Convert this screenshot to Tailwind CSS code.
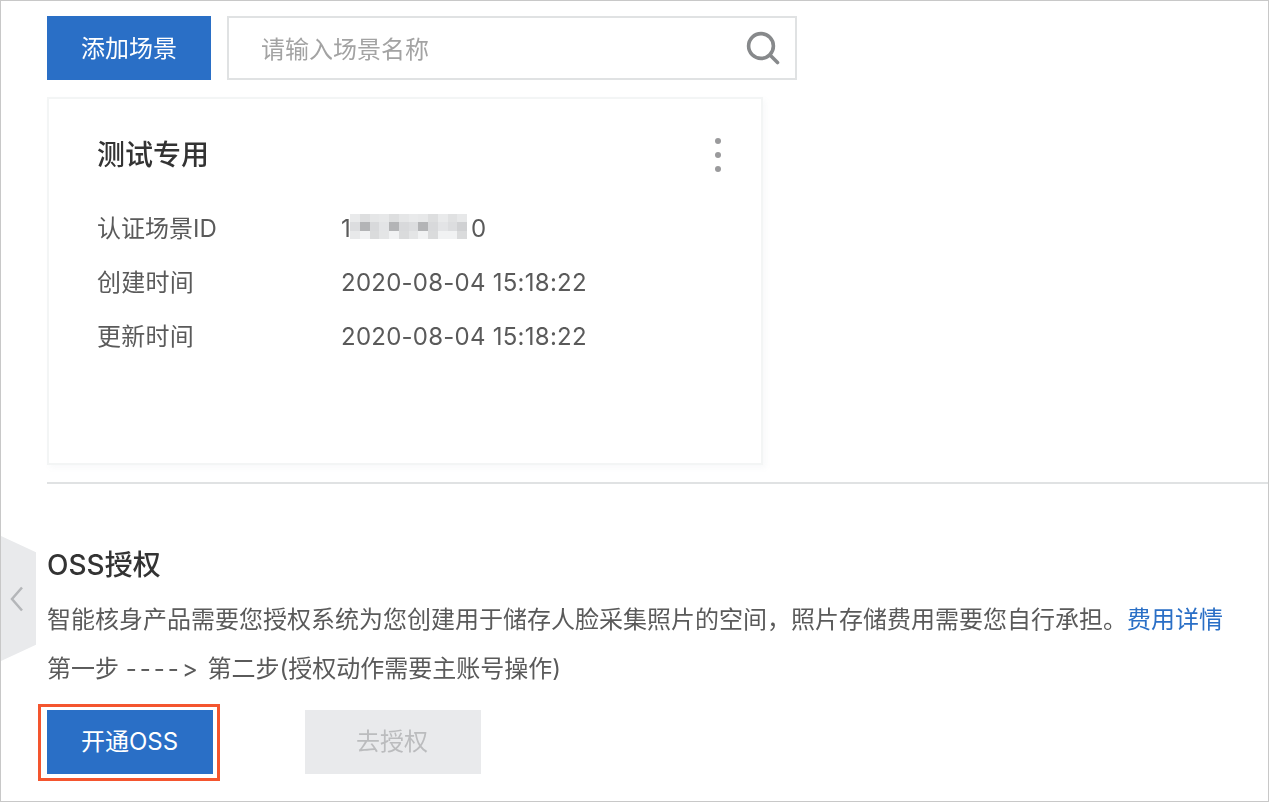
<!DOCTYPE html>
<html lang="zh-CN">
<head>
    <meta charset="UTF-8">
    <title>OSS授权</title>
    <script src="https://cdn.jsdelivr.net/npm/@tailwindcss/browser@4"></script>
</head>
<body class="bg-white">
<div class="relative w-[1269px] h-[802px] overflow-hidden border border-[#c8c8c8] blur-[0.35px] font-['Inter','Noto_Sans_CJK_SC',sans-serif] [font-variant-ligatures:none] [font-feature-settings:'calt'_0] text-[#5a5a5a]">
    <!-- collapse tab -->
    <div class="absolute left-0 top-[535px] w-[35px] h-[125px] bg-[#e9eaec] [clip-path:polygon(0_0,100%_13%,100%_87%,0_100%)] flex items-center pl-[8px]">
        <svg width="16" height="26" viewBox="0 0 16 26" fill="none" stroke="#b4b6b9" stroke-width="2.5"><path d="M13 1.5 3 13l10 11.5"/></svg>
    </div>

    <div class="pl-[46px] pt-[15px]">
        <div class="flex gap-4">
            <button class="w-[164px] h-16 pt-[2px] bg-[#2a6fc6] text-white text-[24px]">添加场景</button>
            <div class="w-[570px] h-16 border-2 border-[#e0e2e3] flex items-center justify-between pl-[32px] pr-[15px]">
                <span class="pt-[4px] text-[24px] text-[#a3a3a3]">请输入场景名称</span>
                <svg width="34" height="34" viewBox="0 0 34 34" fill="none" stroke="#87898b" stroke-width="3.6" stroke-linecap="round"><circle cx="15" cy="15" r="12.4"/><path d="m24 24 7.5 7.5"/></svg>
            </div>
        </div>

        <div class="relative mt-[17px] w-[716px] h-[368px] border-2 border-[#f3f5f5] shadow-[3px_3px_6px_rgba(120,130,160,0.05)] pl-[48px] pt-[37px]">
            <h2 class="text-[28px] leading-[38px] font-medium text-[#333]">测试专用</h2>
            <div class="absolute right-[40px] top-[39px] flex flex-col gap-2">
                <span class="size-[6px] rounded-full bg-[#9a9a9c]"></span>
                <span class="size-[6px] rounded-full bg-[#9a9a9c]"></span>
                <span class="size-[6px] rounded-full bg-[#9a9a9c]"></span>
            </div>
            <dl class="mt-[38px] grid grid-cols-[244px_1fr] auto-rows-[54px] text-[24px] leading-[34px] tracking-[0.25px]">
                <dt class="tracking-normal">认证场景ID</dt>
                <dd class="flex">
                    <span>1</span>
                    <!-- masked id, mosaic cells -->
                    <span class="ml-[-1px] mt-[2px] w-[117px] h-[25px] grid grid-cols-12 grid-rows-[8px_9px_8px]">
                        <i class="bg-[#e9eaeb]"></i><i class="bg-[#dddedf]"></i><i class="bg-[#e5e6e7]"></i><i class="bg-[#e7e8e9]"></i><i class="bg-[#dddedf]"></i><i class="bg-[#e5e6e7]"></i><i class="bg-[#e9eaeb]"></i><i class="bg-[#e7e8e9]"></i><i class="bg-[#dddedf]"></i><i class="bg-[#e9eaeb]"></i><i class="bg-[#e0e1e2]"></i><i class="bg-[#e7e8e9]"></i>
                        <i class="bg-[#dcdddf]"></i><i class="bg-[#b3b4b6]"></i><i class="bg-[#d8d9db]"></i><i class="bg-[#e3e4e6]"></i><i class="bg-[#b3b4b6]"></i><i class="bg-[#d8d9db]"></i><i class="bg-[#dcdddf]"></i><i class="bg-[#b3b4b6]"></i><i class="bg-[#d8d9db]"></i><i class="bg-[#e3e4e6]"></i><i class="bg-[#dcdddf]"></i><i class="bg-[#d0d1d3]"></i>
                        <i class="bg-[#e8e9ea]"></i><i class="bg-[#f1f2f3]"></i><i class="bg-[#dadbdc]"></i><i class="bg-[#e4e5e6]"></i><i class="bg-[#f1f2f3]"></i><i class="bg-[#dadbdc]"></i><i class="bg-[#e4e5e6]"></i><i class="bg-[#f1f2f3]"></i><i class="bg-[#dadbdc]"></i><i class="bg-[#f1f2f3]"></i><i class="bg-[#f1f2f3]"></i><i class="bg-[#dadbdc]"></i>
                    </span>
                    <span class="ml-[4px]">0</span>
                </dd>
                <dt>创建时间</dt>
                <dd>2020-08-04 15:18:22</dd>
                <dt>更新时间</dt>
                <dd>2020-08-04 15:18:22</dd>
            </dl>
        </div>

        <div class="mt-[17px] border-t-2 border-[#e0e2e3]"></div>

        <h2 class="mt-[63px] text-[28px] leading-[36px] font-medium text-[#333]">OSS授权</h2>
        <p class="mt-[19px] text-[24px] leading-[36px] whitespace-nowrap">智能核身产品需要您授权系统为您创建用于储存人脸采集照片的空间，照片存储费用需要您自行承担。<a class="text-[#2a6fc6]">费用详情</a></p>
        <p class="mt-[13px] text-[24px] leading-[36px] whitespace-nowrap">第一步 <span class="tracking-[3px]">----&gt;</span> 第二步(授权动作需要主账号操作)</p>

        <div class="mt-[23px] flex gap-[92px]">
            <div class="relative">
                <button class="w-[166px] h-16 pr-[1px] bg-[#2a6fc6] text-white text-[24px]">开通OSS</button>
                <div class="absolute -left-[9px] -top-[6px] -right-[7px] -bottom-[7px] border-[3px] border-[#f4552e]"></div>
            </div>
            <button class="w-[176px] h-16 pr-[2px] bg-[#e9eaec] text-[#bbbcbe] text-[24px]">去授权</button>
        </div>
    </div>
</div>
</body>
</html>
